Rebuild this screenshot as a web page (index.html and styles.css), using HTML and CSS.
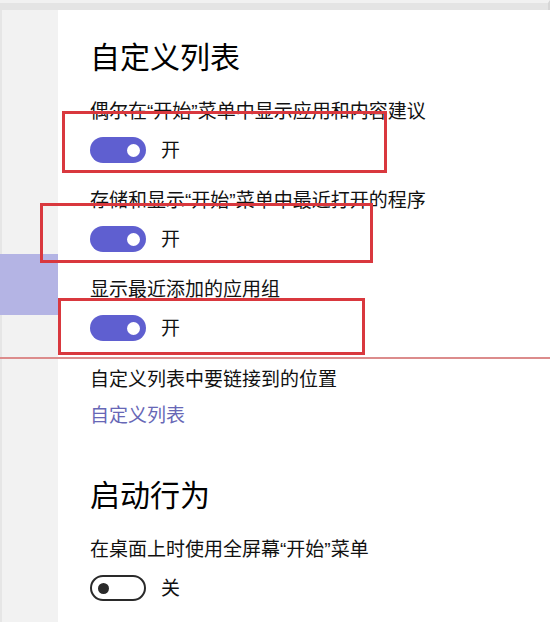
FILE: index.html
```html
<!DOCTYPE html>
<html lang="zh-CN">
<head>
<meta charset="utf-8">
<title>开始</title>
<link rel="stylesheet" href="styles.css">
</head>
<body>
<div class="topbar"></div>
<div class="frame">
  <aside class="sidebar">
    <div class="nav-spacer"></div>
    <div class="nav-active"></div>
  </aside>
  <main class="content">
    <h2 class="heading">自定义列表</h2>
    <div class="setting">
      <div class="label">偶尔在“开始”菜单中显示应用和内容建议</div>
      <div class="toggle-row"><span class="toggle on"><span class="knob"></span></span><span class="state">开</span></div>
    </div>
    <div class="setting">
      <div class="label">存储和显示“开始”菜单中最近打开的程序</div>
      <div class="toggle-row"><span class="toggle on"><span class="knob"></span></span><span class="state">开</span></div>
    </div>
    <div class="setting">
      <div class="label">显示最近添加的应用组</div>
      <div class="toggle-row"><span class="toggle on"><span class="knob"></span></span><span class="state">开</span></div>
    </div>
    <div class="label link-label">自定义列表中要链接到的位置</div>
    <a class="link">自定义列表</a>
    <h2 class="heading heading2">启动行为</h2>
    <div class="setting">
      <div class="label">在桌面上时使用全屏幕“开始”菜单</div>
      <div class="toggle-row"><span class="toggle off"><span class="knob"></span></span><span class="state">关</span></div>
    </div>
  </main>
</div>
<div class="divider"></div>
<div class="mark mark1"></div>
<div class="mark mark2"></div>
<div class="mark mark3"></div>
</body>
</html>
```

FILE: styles.css
```css
* { box-sizing: border-box; }
html, body { margin: 0; padding: 0; }
body {
  width: 550px;
  height: 622px;
  overflow: hidden;
  background: #ffffff;
  font-family: "Liberation Sans", "Noto Sans CJK SC", sans-serif;
  color: #111;
  position: relative;
}
.topbar {
  height: 10px;
  background: #e4e4e4;
  border-top: 3px solid #f1f1f1;
  border-right: 2px solid #d6d6d6;
}
.frame {
  display: flex;
  height: 612px;
}
.sidebar {
  width: 58px;
  flex: none;
  background: #f2f2f2;
  border-left: 2px solid #e6e6e6;
  display: flex;
  flex-direction: column;
}
.nav-spacer { height: 244px; }
.nav-active {
  height: 61px;
  background: #b4b4e4;
  margin-left: -2px;
}
.content {
  flex: 1;
  padding: 33px 0 0 32px;
}
.heading {
  margin: 0;
  font-size: 30px;
  line-height: 30px;
  font-weight: normal;
  color: #000;
}
.heading2 { margin-top: 56px; }
.setting { margin-top: 29px; }
.heading2 + .setting { margin-top: 29px; }
.setting + .setting { margin-top: 28px; }
.label {
  font-size: 19px;
  line-height: 19px;
  white-space: nowrap;
}
.toggle-row {
  display: flex;
  align-items: center;
  margin-top: 16px;
  height: 26px;
}
.toggle {
  width: 56px;
  height: 26px;
  border-radius: 13px;
  display: flex;
  align-items: center;
  flex: none;
}
.toggle.on {
  background: #5f5fd0;
  justify-content: flex-end;
  padding-right: 6px;
}
.toggle.on .knob {
  width: 13px;
  height: 13px;
  border-radius: 50%;
  background: #fff;
}
.toggle.off {
  border: 2.5px solid #2a2a2a;
  padding-left: 6px;
}
.toggle.off .knob {
  width: 11px;
  height: 11px;
  border-radius: 50%;
  background: #2a2a2a;
}
.state {
  margin-left: 15px;
  font-size: 19px;
  line-height: 19px;
}
.link-label { margin-top: 29px; }
.link {
  display: block;
  margin-top: 17px;
  font-size: 19px;
  line-height: 19px;
  color: #6767b6;
  text-decoration: none;
}
.divider {
  position: absolute;
  left: 0;
  top: 357px;
  width: 550px;
  height: 2px;
  background: #dc8c8c;
}
.mark {
  position: absolute;
  border: 3px solid #d9383e;
}
.mark1 { left: 62px; top: 111px; width: 325px; height: 62px; }
.mark2 { left: 40px; top: 203px; width: 333px; height: 60px; }
.mark3 { left: 58px; top: 298px; width: 307px; height: 57px; }
```
